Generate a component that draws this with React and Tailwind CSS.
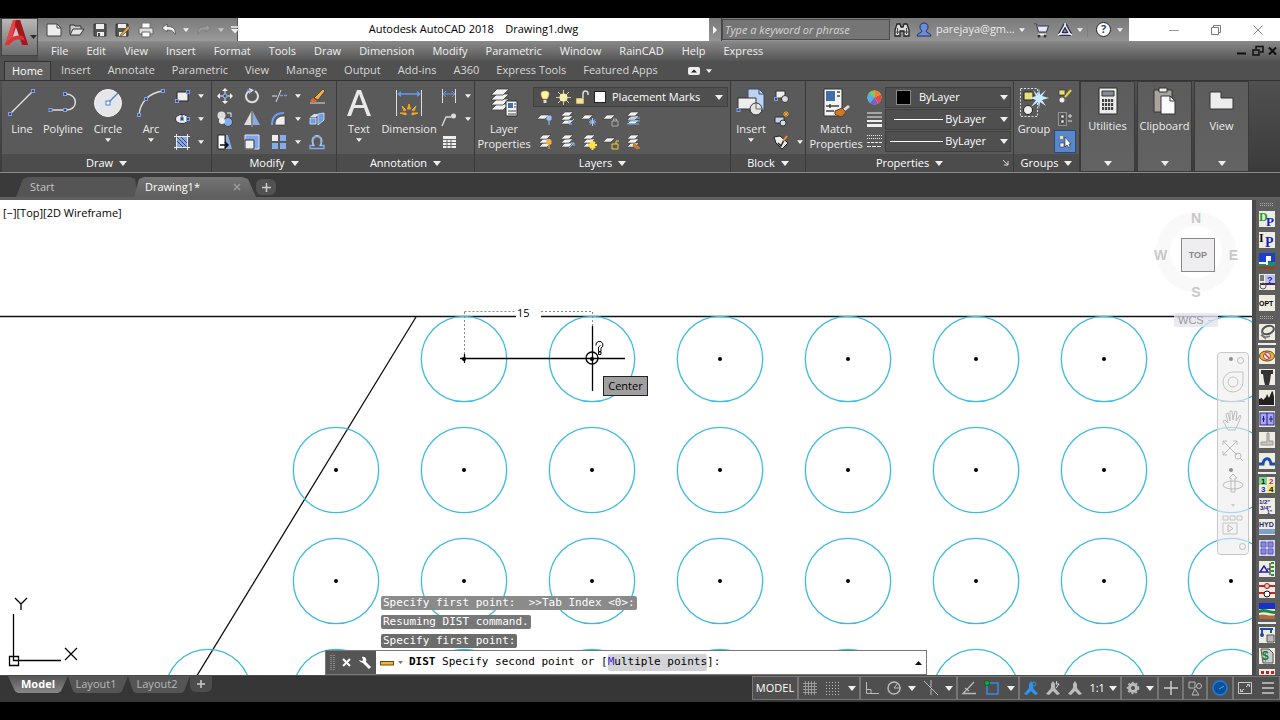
import clsx from "clsx";

const menus = ["File", "Edit", "View", "Insert", "Format", "Tools", "Draw", "Dimension", "Modify", "Parametric", "Window", "RainCAD", "Help", "Express"];
const ribbonTabs = ["Insert", "Annotate", "Parametric", "View", "Manage", "Output", "Add-ins", "A360", "Express Tools", "Featured Apps"];

function Icon({ w = 16, h = w, box, children, className }) {
  return (
    <svg width={w} height={h} viewBox={box || `0 0 ${w} ${h}`} fill="none" className={clsx("shrink-0", className)} aria-hidden="true">
      {children}
    </svg>
  );
}

function Caret({ className, big }) {
  return (
    <svg width={big ? 8 : 6} height={big ? 5 : 4} viewBox="0 0 8 5" className={clsx("shrink-0", className)} aria-hidden="true">
      <path d="M0 0h8L4 5z" fill="#f0f0f0" />
    </svg>
  );
}

/* grip squares used on the draw icons */
function Grip({ x, y }) {
  return <rect x={x - 1.5} y={y - 1.5} width="3" height="3" fill="#3c4a66" stroke="#7f9fea" />;
}

function Panel({ title, className, children, launcher }) {
  return (
    <section className={clsx("flex shrink-0 flex-col border-r border-[#3a3a3a] bg-[#5a5a5a]", className)}>
      <div className="flex flex-1 pt-[3px]">{children}</div>
      <button className="relative flex h-[18px] items-center justify-center gap-1.5 bg-[#4c4c4c] text-[11px] text-white">
        {title}
        <Caret big />
        {launcher && (
          <Icon w={6} className="absolute right-1">
            <path d="M0 0l5 5M5 1v4H1" stroke="#ddd" />
          </Icon>
        )}
      </button>
    </section>
  );
}

function BigButton({ label, icon, caret, className }) {
  return (
    <button className={clsx("flex shrink-0 flex-col items-center text-[11px] leading-[15px] text-[#ececec]", className)}>
      <span className="flex h-[37px] items-center">{icon}</span>
      <span className="whitespace-pre text-center">{label}</span>
      {caret && <Caret className="mt-0.5" />}
    </button>
  );
}

function Small({ icon, caret, label, className }) {
  return (
    <button aria-label={label} className={clsx("flex h-[23px] items-center gap-2", className)}>
      {icon}
      {caret && <Caret />}
    </button>
  );
}

function Logo() {
  return (
    <Icon w={36} h={37}>
      <path d="M3 26L11 1h7l8 25h-6l-3-8-8 2-2 6z" fill="#c3262c" />
      <path d="M3 26L11 1h3L8 26z" fill="#e8454a" />
      <path d="M14 8l3 9-7 3z" fill="#d2c8c8" />
      <path d="M14 1h4l8 25h-5L13 5z" fill="#a3161d" />
      <path d="M3 26c5-8 11-11 18-9l2 5c-7-3-12-1-16 4z" fill="#d83238" />
      <path d="M28 16h7l-3.500 4z" fill="#2b2b2b" />
    </Icon>
  );
}

function QuickAccess() {
  return (
    <div className="flex w-[200px] shrink-0 items-center gap-[7px] border-r border-[#555] bg-gradient-to-b from-[#7a7a7a] to-[#9a9a9a] pl-2">
      <button aria-label="New">
        <Icon w={16}><path d="M1 2h10l4 4v8H1z" fill="#eee" stroke="#444" /><path d="M11 2v4h4" stroke="#444" /></Icon>
      </button>
      <button aria-label="Open">
        <Icon w={16}><path d="M1 12V3h4l1 1h6v2" stroke="#333" fill="#ccc" /><path d="M1 13L4 7h11l-4 6z" fill="#e4e4e4" stroke="#333" /></Icon>
      </button>
      <button aria-label="Save">
        <Icon w={16}><path d="M2 2h12v12H2z" fill="#555" stroke="#333" /><path d="M4 2h8v5H4zM5 10h7v4H5z" fill="#eee" /><path d="M6 11h2v3H6z" fill="#444" /></Icon>
      </button>
      <button aria-label="Save As">
        <Icon w={16}><path d="M1 2h12v12H1z" fill="#555" stroke="#333" /><path d="M3 2h8v4H3zM4 10h7v4H4z" fill="#eee" /><path d="M6 12L13 4l2 2-7 7-3 1z" fill="#eaa23a" stroke="#553" strokeWidth=".7" /></Icon>
      </button>
      <button aria-label="Plot">
        <Icon w={16}><path d="M4 6V1h8v5" fill="#fff" stroke="#777" /><path d="M1 6h14v6H1z" fill="#ddd" stroke="#666" /><path d="M4 10h8v5H4z" fill="#fff" stroke="#666" /></Icon>
      </button>
      <button aria-label="Undo" className="flex items-center gap-1.5">
        <Icon w={16}><path d="M1 6l5-4v2.500c6 0 9 2 8 8-2-4-4-4.500-8-4.500V10z" fill="#f3f3f3" stroke="#444" strokeWidth=".7" /></Icon>
        <Caret />
      </button>
      <button aria-label="Redo" className="flex items-center gap-1.5">
        <Icon w={16}><path d="M15 6l-5-4v2.500c-6 0-9 2-8 8 2-4 4-4.500 8-4.500V10z" fill="#999" stroke="#777" strokeWidth=".7" /></Icon>
        <Caret className="opacity-60" />
      </button>
      <button aria-label="Customize">
        <Icon w={8} h={8}><path d="M0 1h8" stroke="#eee" strokeWidth="1.500" /><path d="M0 3h8L4 7.500z" fill="#eee" /></Icon>
      </button>
    </div>
  );
}

function InfoCenter() {
  return (
    <div className="flex shrink-0 items-center bg-gradient-to-b from-[#7a7a7a] to-[#949494]">
      <button aria-label="Collapse" className="flex h-full w-[13px] items-center justify-center border-r border-[#444]">
        <Icon w={5} h={8}><path d="M0 0l4 4-4 4z" fill="#fff" /></Icon>
      </button>
      <input
        aria-label="Search"
        placeholder="Type a keyword or phrase"
        className="h-[21px] w-[168px] border border-[#4b4b4b] bg-[#757575] px-0.5 text-[11px] italic placeholder:text-[#d6d6d6]"
      />
      <div className="flex w-[239px] items-center text-[11px] text-[#ececec]">
        <button aria-label="Find" className="ml-1">
          <Icon w={16}><path d="M1 14V8l2-6h3l1 3h2l1-3h3l2 6v6h-5V9H6v5z" fill="#dcdcdc" stroke="#222" strokeWidth="1.300" /><path d="M3.500 6v6M12.500 6v6M1 10h5M10 10h5" stroke="#444" /></Icon>
        </button>
        <button className="ml-1.5 flex items-center gap-1">
          <Icon w={16}><path d="M8 1c3 0 4 2 4 4s-1 3-2 4c0 2 5 2 5 5H1c0-3 5-3 5-5-1-1-2-2-2-4s1-4 4-4z" fill="#6d8bd8" stroke="#203062" /></Icon>
          <span>parejaya@gm...</span>
          <Caret />
        </button>
        <button aria-label="App Store" className="ml-2">
          <Icon w={16}><path d="M1 2h2.500l2 8h8l2-6H5" fill="#e8e8f4" stroke="#2a2e50" /><path d="M5 12.500h8" stroke="#eee" strokeWidth="2" /><circle cx="6" cy="14" r="1.500" fill="#333" /><circle cx="12" cy="14" r="1.500" fill="#333" /></Icon>
        </button>
        <button aria-label="A360" className="ml-2 flex items-center gap-1">
          <Icon w={16}><path d="M8 3l5 9H3z" stroke="#2a2e50" strokeWidth="4" strokeLinejoin="round" /><path d="M8 3l5 9H3z" stroke="#eee" strokeWidth="1.500" /><path d="M8 1v4M1 13l4-2M15 13l-4-2" stroke="#eee" strokeWidth="1.500" /></Icon>
          <Caret />
        </button>
        <button aria-label="Help" className="ml-auto flex items-center gap-1.5 border-l border-[#7d7d7d] pr-1.5 pl-2">
          <span className="flex size-[15px] items-center justify-center rounded-full border border-[#222] bg-white text-[11px] font-bold text-[#2b4672]">?</span>
          <Caret />
        </button>
      </div>
      <div className="flex h-full w-[151px] items-center justify-end gap-[30px] bg-white pr-4">
        <button aria-label="Minimize"><Icon w={12}><path d="M1 6.500h10" stroke="#999" /></Icon></button>
        <button aria-label="Restore"><Icon w={12}><path d="M1.500 3.500h7v7h-7zM3.500 3V1.500h7v7H9" stroke="#777" /></Icon></button>
        <button aria-label="Close"><Icon w={12}><path d="M1.500 1.500l9 9M10.500 1.500l-9 9" stroke="#888" /></Icon></button>
      </div>
    </div>
  );
}

function TopBars() {
  return (
    <header className="flex h-[43px] shrink-0 bg-[#505050] pl-px">
      <button aria-label="Application menu" className="flex h-[38px] w-[37px] shrink-0 border border-[#444] bg-gradient-to-b from-[#b8b8b8] to-[#6d6d6d]">
        <Logo />
      </button>
      <div className="flex min-w-0 flex-1 flex-col">
        <div className="flex h-[23px] bg-white">
          <QuickAccess />
          <h1 className="flex flex-1 items-center justify-center whitespace-pre text-[11px] text-black">{"Autodesk AutoCAD 2018    Drawing1.dwg"}</h1>
          <InfoCenter />
        </div>
        <div className="flex h-5 items-center bg-gradient-to-b from-[#8a8a8a] to-[#555] pl-[13px] text-[11px] text-[#f0f0f0]">
          <nav className="flex gap-[18px]">
            {menus.map((m) => <button key={m}>{m}</button>)}
          </nav>
          <div className="ml-auto flex items-center gap-1 pr-0.5">
            <button aria-label="Minimize drawing"><Icon w={12}><path d="M1 8.500h9" stroke="#111" strokeWidth="2" /></Icon></button>
            <button aria-label="Restore drawing"><Icon w={12}><path d="M1 5h6v5H1zM4 4V1.500h7V7H8" stroke="#111" strokeWidth="1.500" /></Icon></button>
            <button aria-label="Close drawing"><Icon w={10}><path d="M1 1.500l7 7M8 1.500l-7 7" stroke="#111" strokeWidth="2" /></Icon></button>
          </div>
        </div>
      </div>
    </header>
  );
}

const lineIcon = <Icon w={30} h={30}><path d="M3 26L26 3" stroke="#ddd" strokeWidth="1.500" /><Grip x={3} y={26} /><Grip x={26} y={3} /></Icon>;
const polyIcon = <Icon w={30} h={30}><path d="M2 22h16c13 0 12-16 0-16" stroke="#ddd" strokeWidth="1.500" /><Grip x={2.5} y={22} /><Grip x={17} y={22} /><Grip x={17} y={6} /></Icon>;
const circleIcon = <Icon w={30} h={30}><circle cx="15" cy="15" r="13.500" fill="#e4e6ea" stroke="#f5f5f5" /><path d="M15 15L25 5" stroke="#4d8ac0" strokeWidth="1.500" /><rect x="13" y="13" width="4" height="4" fill="#fff" stroke="#3f83d8" /></Icon>;
const arcIcon = <Icon w={30} h={30}><path d="M3 27C4 15 12 5 27 3" stroke="#ddd" strokeWidth="1.500" /><Grip x={3} y={27} /><Grip x={10} y={11} /><Grip x={27} y={3} /></Icon>;
const textIcon = <Icon w={26} h={30}><path d="M1 28L11 2h4l10 26h-4l-3-8H8l-3 8zM9 17h8L13 6z" fill="#e8e8e8" /></Icon>;
const dimIcon = (
  <Icon w={28} h={30}>
    <path d="M1.500 2v26M26.500 2v26" stroke="#ddd" /><path d="M4 6h20" stroke="#5b9cf5" strokeWidth="1.500" /><path d="M2 6l4-3v6zM26 6l-4-3v6z" fill="#5b9cf5" />
    <path d="M14 16l1.500 5h-3zM7 18l4 4-2 1zM21 18l-4 4 2 1zM5 25h6v2zM23 25h-6v2z" fill="#f3a52c" stroke="#f3a52c" />
  </Icon>
);

function Sheets({ x = 0, y = 0, n = 3, fill = "#f2f2f2" }) {
  const ys = [8, 4, 0].slice(3 - n);
  return ys.map((d) => <path key={d} d={`M${x + 4} ${y + d}h8l-4 4H${x}z`} fill={fill} stroke="#3a3a3a" strokeWidth=".6" />);
}

const layerPropsIcon = (
  <Icon w={30} h={30}>
    {[16, 11, 6, 1].map((y) => <path key={y} d={`M8 ${y}h12l-6 6H2z`} fill="#f2f2f2" stroke="#3a3a3a" strokeWidth=".8" />)}
    <path d="M17 13h11v15H17z" fill="#f6f6f6" stroke="#333" /><path d="M19 15h5v5h-5z" fill="#4271ae" /><path d="M25 16h2M25 19h2M19 23h8M19 26h8" stroke="#444" />
  </Icon>
);
const insertIcon = (
  <Icon w={30} h={30}>
    <path d="M12 1h11l5 5v16H12z" fill="#bdd3f2" stroke="#3c4b66" /><path d="M23 1v5h5" stroke="#3c4b66" />
    <path d="M2 10h18v11H2z" fill="#eee" stroke="#333" /><circle cx="20" cy="21" r="6" fill="#e3e3e3" stroke="#333" /><path d="M20 21v-5M20 21h5" stroke="#666" /><Grip x={2.5} y={22} />
  </Icon>
);
const matchIcon = (
  <Icon w={30} h={30}>
    <path d="M3 1h18v27H3z" fill="#f3f3f3" stroke="#333" /><path d="M5 3h9v10H5z" fill="#3f6ea8" /><path d="M16 4h3M16 8h3M5 18h13M5 23h8M9 16v4" stroke="#444" strokeWidth="1.500" />
    <path d="M27 17l2 2-5 4-2-2z" fill="#ddd" /><path d="M14 23l7-3 4 4-4 5c-3-1-5-1-7-3z" fill="#c97a2c" stroke="#6b3d12" />
  </Icon>
);
const groupIcon = (
  <Icon w={30} h={31}>
    <path d="M1.500 1.500h17v28h-17z" stroke="#ddd" strokeDasharray="2 1.500" /><path d="M5 5h9v8H5z" fill="#e8df7a" stroke="#222" /><circle cx="9" cy="23" r="4.500" fill="#eee" stroke="#222" />
    <path d="M20 1l1 7 6-5-4 6 7 2-7 2 4 6-6-4-1 7-1-7-7 5 5-7-6-2 6-2-3-6 5 5z" fill="#c8ecff" />
  </Icon>
);
const calcIcon = (
  <Icon w={22} h={28}>
    <path d="M2 1h18v26H2z" fill="#ededed" stroke="#2b2b2b" /><path d="M5 4h12v5H5z" fill="#848b92" stroke="#333" />
    {[12, 16, 20].map((y) => [5, 8, 11, 14].map((x) => <rect key={`${x}-${y}`} x={x} y={y} width="2.200" height="3" fill="#444" />))}
  </Icon>
);
const clipIcon = (
  <Icon w={26} h={28}>
    <path d="M2 3h18v22H2z" fill="#a9a59d" stroke="#333" /><path d="M7 1h8v4H7z" fill="#eee" stroke="#333" /><path d="M9 9h9l5 5v13H9z" fill="#fafafa" stroke="#333" /><path d="M18 9v5h5" stroke="#333" />
  </Icon>
);
const viewIcon = <Icon w={26} h={28}><path d="M1 5h11v6h12v11H1z" fill="#ececec" stroke="#333" /></Icon>;

const modifyIcons = [
  ["Move", <Icon><path d="M8 0l3 3H5zM8 16l3-3H5zM0 8l3-3v6zM16 8l-3-3v6z" fill="#f2f2f2" /><path d="M8 3v3M8 10v3M3 8h3M10 8h3" stroke="#eee" /><Grip x={8} y={8} /></Icon>],
  ["Rotate", <Icon><path d="M11 3a6 6 0 1 1-6 0" stroke="#ddd" strokeWidth="2" /><path d="M5 0v6L10 2z" fill="#ddd" /><path d="M3 2h3v3" stroke="#6d9cf0" /></Icon>],
  ["Trim", <Icon><path d="M1 8h5M5 14l5-12" stroke="#ddd" /><path d="M9 7.500h7" stroke="#6d9cf0" strokeDasharray="3 1" strokeWidth="1.500" /></Icon>, true],
  ["Erase", <Icon><path d="M1 15h15" stroke="#ddd" /><path d="M5 10L14 1l2 2-7 9z" fill="#f0b04a" stroke="#222" strokeWidth=".6" /><path d="M4 10l4 3-3 2-4-2z" fill="#e6663c" /></Icon>],
  ["Copy", <Icon><circle cx="4.500" cy="4.500" r="4" fill="#ddd" /><circle cx="11" cy="11" r="4.500" fill="#86abe8" stroke="#345" /><circle cx="5" cy="10" r="3" fill="#eee" /><path d="M10 2h4v4" stroke="#eee" /></Icon>],
  ["Mirror", <Icon><path d="M7 1v13H0z" fill="#ddd" /><path d="M9 1v13h7z" fill="#86abe8" /><path d="M8 0v16" stroke="#eee" strokeWidth=".6" /></Icon>],
  ["Fillet", <Icon><path d="M1 14C1 6 5 2 13 2" stroke="#6d9cf0" strokeWidth="2" /><path d="M4 14c0-6 3-9 10-9v9z" fill="#eee" stroke="#333" strokeWidth=".6" /></Icon>, true],
  ["Explode", <Icon><path d="M1 6l4-3h5l-3 3z" fill="#cfe0fb" /><path d="M1 7h6v6H1zM9 3l6-1v7l-6 5z" fill="#6f9ce0" stroke="#dce8fc" strokeWidth=".8" /></Icon>],
  ["Stretch", <Icon><path d="M1 1h7v14H1z" fill="#fff" stroke="#222" /><path d="M9 1h2l4 14H9z" fill="#86abe8" /><path d="M3 11h7M8 8l3 3-3 3" stroke="#111" strokeWidth="1.500" /></Icon>],
  ["Scale", <Icon><path d="M1 1h14v14H1z" fill="#7fa6ea" stroke="#dce6f8" /><path d="M1 6h9v9H1z" fill="#eee" stroke="#333" /></Icon>],
  ["Array", <Icon><path d="M1 1h6v6H1z" fill="#eee" /><path d="M9 1h6v6H9zM1 9h6v6H1zM9 9h6v6H9z" fill="#86abe8" /></Icon>, true],
  ["Offset", <Icon><path d="M1 14.500h14v-3h-4c5-12-11-12-6 0H1z" stroke="#86abe8" strokeWidth="1.300" /><path d="M4.500 12c-7-14 14-14 7 0" stroke="#e2e9f5" strokeWidth=".8" /></Icon>],
];

const layerMarks = [
  <path key="a" d="M10 5h4v4h-4zM12 9v5" fill="#9ec0f3" stroke="#9ec0f3" />,
  <path key="b" d="M15 8l-5 5M10 10v3h3" stroke="#9ec0f3" />,
  <path key="c" d="M8 11h7M11.500 7v8M9 8.500l5 5M14 8.500l-5 5" stroke="#a8d0ff" />,
  <path key="d" d="M9 10h6v5H9zM10.500 10V8h3v2" stroke="#aaa" />,
  <path key="e" d="M3 10h12M2 13h12M5 7h10" stroke="#79b3ee" />,
  <path key="f" d="M10 6h4v4h-4zM12 10v5" fill="#f5ae3a" stroke="#f5ae3a" />,
  <path key="g" d="M10 14l5-5M12 9h3v3" stroke="#9ec0f3" />,
  <path key="h" d="M7 11h9M11.500 7v9M9 8l5 6M14 8l-5 6" stroke="#ffe14a" strokeWidth="2" />,
  <path key="i" d="M9 10h6v5H9zM13 10V7h3" stroke="#f0cc3a" />,
  <path key="j" d="M9 9l6 5-3 1-4-3z" fill="#c97a2c" stroke="#c97a2c" />,
];
const layerTools = ["Off", "Isolate", "Freeze", "Lock", "Make Current", "Turn All Layers On", "Unisolate", "Thaw All Layers", "Unlock", "Match Layer"];
const singleSheet = ["Off", "Freeze", "Lock", "Unlock"];

function LayersPanel() {
  return (
    <Panel title="Layers" className="w-[256px]">
      <BigButton className="w-[58px]" label={"Layer\nProperties"} icon={layerPropsIcon} />
      <div className="flex flex-1 flex-col pt-[3px]">
        <button className="mr-0.5 flex h-5 shrink-0 items-center gap-1 border border-[#404040] bg-[#4f4f4f] px-1 text-[11px] text-white">
          <Icon w={14}><path d="M7 1c6 0 4 5 2 8H5C3 6 1 1 7 1z" fill="#fff2a0" stroke="#c9b44c" strokeWidth=".6" /><path d="M5.500 10h3v3h-3z" fill="#ddd" /></Icon>
          <Icon w={15}><path d="M7.500 0v15M0 7.500h15M2 2l11 11M13 2L2 13" stroke="#d8cc9a" /><circle cx="7.500" cy="7.500" r="4" fill="#f8eeb0" /></Icon>
          <Icon w={15}><path d="M1 8h8v6H1z" fill="#f3e3a0" stroke="#6b5a20" strokeWidth=".6" /><path d="M8 8V4c0-4 5-4 5 0v1" stroke="#ddd" strokeWidth="1.500" /></Icon>
          <span className="size-3 border border-[#222] bg-white" />
          <span className="ml-0.5">Placement Marks</span>
          <Caret big className="ml-auto" />
        </button>
        <div className="grid w-[114px] grid-cols-5 pl-1">
          {layerTools.map((t, i) => (
            <Small
              key={t}
              label={t}
              icon={<Icon><Sheets x={singleSheet.includes(t) ? 0 : 2} y={singleSheet.includes(t) ? 4 : 1} n={singleSheet.includes(t) ? 1 : 3} />{layerMarks[i]}</Icon>}
            />
          ))}
        </div>
      </div>
    </Panel>
  );
}

function PropertyRow({ icon, children }) {
  return (
    <div className="flex h-[22px] items-center gap-0.5">
      <span className="flex w-[17px] justify-center">{icon}</span>
      <button className="flex h-[21px] flex-1 items-center border border-[#3f3f3f] bg-[#4f4f4f] pr-0.5 text-[11px] text-white">
        {children}
        <Caret big className="ml-auto" />
      </button>
    </div>
  );
}

function SlidePanel({ label, icon }) {
  return (
    <button className="mr-0.5 flex w-[55px] shrink-0 flex-col items-center border border-[#3a3a3a] bg-gradient-to-b from-[#5c5c5c] to-[#636363] text-[11px] leading-[15px] text-[#ececec]">
      <span className="mt-0.5 flex h-[34px] items-center">{icon}</span>
      {label}
      <Caret big className="mt-auto mb-[5px]" />
    </button>
  );
}

function Ribbon() {
  return (
    <div className="shrink-0 bg-[#505050]">
      <div className="flex h-[19px] items-center pl-1 text-[11px] text-[#d8d8d8]">
        <button className="flex h-full w-[47px] items-center justify-center border border-b-0 border-[#333] bg-[#626262] text-white">Home</button>
        <nav className="flex gap-[17px] pl-2.5">
          {ribbonTabs.map((t) => <button key={t}>{t}</button>)}
        </nav>
        <button aria-label="Minimize ribbon" className="ml-[30px] flex items-center gap-1.5">
          <Icon w={12} h={8}><rect width="12" height="8" rx="2" fill="#eee" /><path d="M3 5.500h6L6 2.500z" fill="#222" /></Icon>
          <Caret />
        </button>
      </div>
      <div className="flex h-[93px] border-t border-b border-t-[#333] border-b-[#8b8b8b] bg-gradient-to-b from-[#505050] to-[#3b3b3b] pl-0.5">
        <Panel title="Draw" className="w-[210px]">
          <BigButton className="w-10" label="Line" icon={lineIcon} />
          <BigButton className="w-[42px]" label="Polyline" icon={polyIcon} />
          <BigButton className="w-12" label="Circle" icon={circleIcon} caret />
          <BigButton className="w-[38px]" label="Arc" icon={arcIcon} caret />
          <div className="pl-1">
            <Small caret label="Rectangle" icon={<Icon><path d="M3 4h11v9H3z" fill="#eee" stroke="#222" /><Grip x={3} y={13} /><Grip x={14} y={4} /></Icon>} />
            <Small caret label="Ellipse" icon={<Icon><ellipse cx="8" cy="8" rx="6.500" ry="4.500" fill="#eee" stroke="#333" /><Grip x={8} y={8} /><Grip x={14} y={8} /><path d="M8 3v4" stroke="#336" /></Icon>} />
            <Small caret label="Hatch" icon={<Icon><path d="M2.500 0v16M13.500 0v16M0 2.500h16M0 13.500h16" stroke="#e8e8e8" /><path d="M3 3h10v10H3z" fill="#89a9e6" /><path d="M3 7l6 6M3 3l10 10M7 3l6 6" stroke="#30436b" /></Icon>} />
          </div>
        </Panel>
        <Panel title="Modify" className="w-[125px]">
          <div className="grid h-[69px] grid-cols-[27px_27px_38px_20px] pl-[5px]">
            {modifyIcons.map(([label, icon, caret]) => <Small key={label} label={label} icon={icon} caret={caret} />)}
          </div>
        </Panel>
        <Panel title="Annotation" className="w-[138px]">
          <BigButton className="w-[44px]" label="Text" icon={textIcon} caret />
          <BigButton className="w-[56px]" label="Dimension" icon={dimIcon} />
          <div className="pl-1">
            <Small caret label="Linear" icon={<Icon><path d="M1.500 1v14M14.500 1v14" stroke="#ddd" /><path d="M2 6h12M5 3L2 6l3 3M11 3l3 3-3 3" stroke="#5b9cf5" /></Icon>} />
            <Small caret label="Leader" icon={<Icon><path d="M1 15L5 6h5" stroke="#ddd" strokeWidth="1.300" /><circle cx="12.500" cy="5" r="2.500" fill="#ddd" /></Icon>} />
            <Small label="Table" icon={<Icon><path d="M2 2h13v12H2z" fill="#eee" /><path d="M2 5.500h13M2 8.500h13M2 11.500h13M6 5v9M10 5v9" stroke="#666" /></Icon>} />
          </div>
        </Panel>
        <LayersPanel />
        <Panel title="Block" className="w-[75px]">
          <BigButton className="w-10" label="Insert" icon={insertIcon} caret />
          <div className="pl-0.5">
            <Small label="Create" icon={<Icon><path d="M3 3h9v7H3z" fill="#eee" stroke="#333" /><circle cx="12" cy="11" r="3.500" fill="#ddd" stroke="#333" /><Grip x={3} y={11} /></Icon>} />
            <Small label="Edit" icon={<Icon><path d="M2 6h9v6H2z" fill="#bdd3f2" stroke="#333" /><circle cx="10" cy="12" r="3" fill="#ddd" stroke="#333" /><path d="M11 5l4-4M11 1l4 4M13 0v6M10 3h6" stroke="#f3a52c" /></Icon>} />
            <Small caret label="Edit Attributes" icon={<Icon><path d="M1 3l6-1 8 7-6 6-6-6z" fill="#eee" stroke="#222" /><path d="M5 9l3 3 3-6" stroke="#222" strokeWidth="1.500" /><path d="M10 7l4-5" stroke="#e8923a" strokeWidth="2" /></Icon>} />
          </div>
        </Panel>
        <Panel title="Properties" launcher className="w-[208px]">
          <BigButton className="w-[60px]" label={"Match\nProperties"} icon={matchIcon} />
          <div className="flex-1 pt-0.5 pr-0.5">
            <PropertyRow icon={<Icon w={15}><circle cx="7.500" cy="7.500" r="7" fill="#f4c63e" /><path d="M7.500 7.500V.5a7 7 0 0 1 6 3.500z" fill="#ef7d3a" /><path d="M7.500 7.500L2 3a7 7 0 0 1 5.500-2.500z" fill="#7fc85a" /><path d="M7.500 7.500L2 3a7 7 0 0 0 1 10z" fill="#4fb0e8" /><path d="M7.500 7.500L3 13a7 7 0 0 0 8 .5z" fill="#7a5ad0" /><path d="M7.500 7.500l4 6a7 7 0 0 0 2-9z" fill="#e0484e" /></Icon>}>
              <span className="mr-2 ml-2.5 size-[15px] border border-[#888] bg-black" />
              <span>ByLayer</span>
            </PropertyRow>
            <PropertyRow icon={<Icon w={15}><path d="M0 1h15M0 5h15" stroke="#eee" /><path d="M0 9h15" stroke="#eee" strokeWidth="2" /><path d="M0 13.500h15" stroke="#eee" strokeWidth="3" /></Icon>}>
              <span className="mr-0.5 ml-2 h-px flex-1 bg-white" />
              <span className="mr-3.5">ByLayer</span>
            </PropertyRow>
            <PropertyRow icon={<Icon w={15}><path d="M0 1.500h15M0 4.500h15" stroke="#eee" strokeDasharray="1 1" /><path d="M0 8.500h15" stroke="#eee" strokeDasharray="3 1" /><path d="M0 12.500h15" stroke="#eee" strokeDasharray="4 1" /></Icon>}>
              <span className="mr-0.5 ml-1 h-px flex-1 bg-white" />
              <span className="mr-3.5">ByLayer</span>
            </PropertyRow>
          </div>
        </Panel>
        <Panel title="Groups" className="w-[66px]">
          <BigButton className="w-10" label="Group" icon={groupIcon} />
          <div>
            <Small label="Group Edit" className="w-[22px] justify-center" icon={<Icon><path d="M2 2h6v5H2z" fill="#e8df7a" stroke="#222" strokeWidth=".6" /><circle cx="5" cy="12" r="2.500" fill="#eee" /><path d="M8 9l6-7" stroke="#f3d23a" strokeWidth="2" /></Icon>} />
            <Small label="Ungroup" className="w-[22px] justify-center" icon={<Icon><path d="M1.500 1.500h8v13h-8z" stroke="#ccc" strokeDasharray="1 1" /><path d="M4 4h3v3H4zM4 9h3v3H4z" fill="#eee" stroke="#222" strokeWidth=".5" /><path d="M11 5h4M13 3v4M11 10h4" stroke="#ddd" /></Icon>} />
            <Small label="Group Selection" className="w-[22px] justify-center border border-[#294a80] bg-[#5a86cc]" icon={<Icon><path d="M3 2h3v3H3z" fill="#f3e57a" /><path d="M3 9h4v4H3z" fill="#eee" stroke="#222" strokeWidth=".5" /><path d="M8 3v10l2-2 2 3 1-1-1-3h2z" fill="#fff" stroke="#222" strokeWidth=".6" /></Icon>} />
          </div>
        </Panel>
        <SlidePanel label="Utilities" icon={calcIcon} />
        <SlidePanel label="Clipboard" icon={clipIcon} />
        <SlidePanel label="View" icon={viewIcon} />
      </div>
    </div>
  );
}

function FileTabs() {
  return (
    <div className="flex h-[27px] shrink-0 items-end border-b-[3px] border-[#606060] bg-[#3a3a3a] pl-4 text-[11px]">
      <button className="h-5 w-[122px] bg-[#555] pl-3.5 text-left text-[#c4c4c4] [clip-path:polygon(0_100%,7px_10%,12px_0,114px_0,119px_10%,100%_100%)]">Start</button>
      <div className="-ml-1 flex h-5 w-[122px] items-center justify-between bg-gradient-to-b from-[#757575] to-[#5e5e5e] pr-[15px] pl-[11px] text-white [clip-path:polygon(0_100%,5px_10%,10px_0,108px_0,114px_10%,100%_100%)]">
        <button>Drawing1*</button>
        <button aria-label="Close tab"><Icon w={8}><path d="M1 1l6 6M7 1L1 7" stroke="#999" strokeWidth="1.500" /></Icon></button>
      </div>
      <button aria-label="New drawing" className="mb-0.5 flex h-4 w-5 items-center justify-center rounded-md bg-[#525252]">
        <Icon w={9}><path d="M4.500 0v9M0 4.500h9" stroke="#ccc" strokeWidth="1.500" /></Icon>
      </button>
    </div>
  );
}

const columns = [208, 336, 464, 592, 720, 848, 976, 1104, 1231];
const rows = [
  { y: 159, from: 2 },
  { y: 270, from: 1 },
  { y: 381, from: 1 },
  { y: 492, from: 0 },
];

function Drawing() {
  return (
    <svg className="absolute inset-0 h-full w-full" fill="none" aria-label="Model space">
      <path d="M0 116.500H516M541 116.500H3000M416 117L190 487" stroke="#111" strokeWidth="1.300" />
      {rows.map((r) => columns.slice(r.from).map((x) => (
        <g key={`${x}-${r.y}`}>
          <circle cx={x} cy={r.y} r="42.700" stroke="#3fbbe2" strokeWidth="1.300" />
          <circle cx={x} cy={r.y} r="2" fill="#000" />
        </g>
      )))}
      <path d="M464.500 111.500H516M541 111.500H592.500M464.500 112v46M592.500 112v14" stroke="#888" strokeDasharray="2 2" />
      <path d="M460 158.500H625M464.500 154v9M592.500 126v65" stroke="#000" strokeWidth="1.300" />
      <circle cx="592" cy="158" r="6" stroke="#000" strokeWidth="1.300" />
      <path d="M596 145.500a3.500 3.500 0 1 1 5 2.500v3.500h-2.500V147l2-1.500M598.500 152h2.500v2.500h-2.500z" stroke="#000" />
      <path d="M13.500 414v46.500H61M9.500 456.500h9v9h-9z" stroke="#000" strokeWidth="1.300" />
      <path d="M15 398l6 6 6-6M21 404v6M65 448l12 12M77 448l-12 12" stroke="#000" strokeWidth="1.300" />
    </svg>
  );
}

function ViewCube() {
  return (
    <div className="absolute top-2 right-3.5 w-[84px] text-center font-['Liberation_Sans'] text-[14px] leading-5 font-bold text-[#c8c8c8]">
      <span className="absolute top-1 left-0.5 -z-0 size-20 rounded-full border-[14px] border-[#f9f9f9]" />
      <div className="relative">N</div>
      <div className="relative flex h-[54px] items-center justify-between">
        <span>W</span>
        <button className="flex size-[34px] items-center justify-center border border-[#888] bg-[#eeeef1] text-[9px] text-[#888]">TOP</button>
        <span>E</span>
      </div>
      <div className="relative">S</div>
      <button className="mt-[11px] mr-auto ml-5 flex h-[14px] w-[44px] items-center gap-1 rounded-xs bg-[#e4e4ef]/80 px-1 text-[11px] font-normal text-[#999]">
        WCS<span className="h-px w-2.5 bg-[#ccc]" />
      </button>
    </div>
  );
}

function NavBar() {
  return (
    <div className="absolute top-[152px] right-[3px] flex w-8 flex-col items-center gap-2 rounded-sm border border-[#c8c8c8] bg-[#ececec]/60 pt-[18px] pb-1">
      <button aria-label="Close navigation bar" className="absolute top-1 right-1"><Icon w={7}><circle cx="3.500" cy="3.500" r="3" stroke="#bbb" /></Icon></button>
      <button aria-label="Steering wheel"><Icon w={22}><path d="M11 1a10 10 0 1 0 10 10V1z" stroke="#c4c4c4" /><circle cx="11" cy="11" r="5" stroke="#c4c4c4" /></Icon></button>
      <span className="h-px w-6 bg-[#ccc]" />
      <button aria-label="Pan"><Icon w={22}><path d="M6 20L1 11l2-1 3 3-2-9 2-1 2 8V1h2l1 9 2-9 2 1-1 9 4-6 1 1-3 8-3 6z" stroke="#bcbcbc" /></Icon></button>
      <button aria-label="Zoom extents"><Icon w={22}><path d="M1 1l14 14M15 1L1 15M1 5V1h4M11 1h4v4M1 11v4h4" stroke="#bcbcbc" /><circle cx="16" cy="16" r="3" stroke="#bcbcbc" /><path d="M18 18l3 3" stroke="#bcbcbc" /></Icon></button>
      <button aria-label="Orbit" className="flex flex-col items-center gap-2 pt-1">
        <Icon w={22}><path d="M9 4v14h4V4h2l-4-4-4 4z" stroke="#bcbcbc" /><ellipse cx="11" cy="11" rx="10" ry="4" stroke="#bcbcbc" /></Icon>
        <Icon w={4} h={3}><path d="M0 0h4L2 3z" fill="#ccc" /></Icon>
      </button>
      <button aria-label="ShowMotion"><Icon w={22} h={20}><path d="M1 1h5v4H1zM8 1h5v4H8zM15 1h5v4h-5zM1 8h14v11H1z" stroke="#c4c4c4" /><path d="M6 10l5 3.500L6 17z" stroke="#bcbcbc" /></Icon></button>
      <button aria-label="Navigation bar options" className="mr-0.5 self-end"><Icon w={7}><circle cx="3.500" cy="3.500" r="3" stroke="#bbb" /></Icon></button>
    </div>
  );
}

function CommandLine() {
  const log = [
    { text: "Specify first point:  >>Tab Index <0>:", tone: "bg-[#858585]/95" },
    { text: "Resuming DIST command.", tone: "bg-[#707070]/95" },
    { text: "Specify first point:", tone: "bg-[#646464]/95" },
  ];
  return (
    <div className="absolute bottom-0 left-[325px] w-[602px] font-['DejaVu_Sans_Mono'] text-[11px]">
      <div className="mb-0.5 ml-14 flex flex-col items-start gap-[5px] leading-[14px]">
        {log.map((l, i) => <p key={i} className={clsx("rounded-xs px-0.5 whitespace-pre text-white", l.tone)}>{l.text}</p>)}
      </div>
      <div className="flex h-[25px] items-center border border-[#777] bg-white">
        <div className="flex h-full w-[50px] items-center justify-between bg-[#555] px-1">
          <Icon w={5} h={16}><path d="M1 0v16M4 0v16" stroke="#bbb" strokeDasharray="1 1" /></Icon>
          <button aria-label="Close command line"><Icon w={9}><path d="M1 1l7 7M8 1L1 8" stroke="#fff" strokeWidth="2" /></Icon></button>
          <button aria-label="Customize command line"><Icon w={14}><path d="M12 12L6 6" stroke="#fff" strokeWidth="3" /><path d="M1 4l3 1 1-1-1-3c4-1 5 3 4 5s-6 1-7-2z" fill="#fff" /></Icon></button>
        </div>
        <button aria-label="Recent commands" className="ml-1 flex items-center gap-1">
          <Icon w={14} h={6}><rect x=".5" y="1.500" width="13" height="3.500" fill="#f3b52c" stroke="#6b4a10" /></Icon>
          <Icon w={5} h={3}><path d="M0 0h5L2.500 3z" fill="#777" /></Icon>
        </button>
        <p className="ml-1.5 whitespace-pre text-black">
          <b>DIST</b>{" Specify second point or ["}
          <button className="rounded-xs bg-[#d4d4d8]"><span className="text-[#3c28d8]">M</span>ultiple points</button>
          {"]:"}
        </p>
        <button aria-label="Command history" className="mr-1 ml-auto"><Icon w={7} h={4}><path d="M0 4h7L3.500 0z" fill="#111" /></Icon></button>
      </div>
    </div>
  );
}

function Grips() {
  return <Icon w={14} h={3}><path d="M0 .5h14M0 2.500h14" stroke="#aaa" strokeDasharray="1 1" /></Icon>;
}

function Divider() {
  return <span className="-my-0.5 h-0.5 w-[18px] shrink-0 bg-[#eee]" />;
}

function Tile({ label, children }) {
  return (
    <button aria-label={label} className="shrink-0">
      <Icon><rect width="16" height="16" fill="#efece2" />{children}</Icon>
    </button>
  );
}

const serif = { fontFamily: "Liberation Serif", fontWeight: 700 };
const sans = { fontFamily: "Liberation Sans", fontWeight: 700 };

function SideToolbar() {
  return (
    <aside className="flex w-7 shrink-0 flex-col items-center gap-[5px] overflow-hidden border-l-4 border-[#4a4a4a] bg-[#5e5e5e] pt-[3px] pr-0.5">
      <Grips />
      <Tile label="Drip"><text x="0" y="10" fontSize="12" fill="#1f9c38" style={serif}>D</text><text x="7" y="15" fontSize="13" fill="#1c1cc4" style={serif}>P</text></Tile>
      <Tile label="Irrigation"><text x="0" y="10" fontSize="12" fill="#111" style={serif}>I</text><text x="6" y="15" fontSize="14" fill="#1c1cc4" style={serif}>P</text></Tile>
      <Tile label="Landscape"><rect width="16" height="9" fill="#1a3fd0" /><rect y="9" width="16" height="4" fill="#1c8a7c" /><rect y="13" width="16" height="3" fill="#8a4a1c" /><path d="M0 9h7V3h5v5H9v4H7v-1H0z" fill="#fff" /></Tile>
      <Tile label="Query"><rect x="6" y="1" width="10" height="8" fill="#b9c4f2" /><text x="8" y="9" fontSize="9" fill="#1c1cc4" style={sans}>?</text><path d="M1 1h4v6H1z" fill="#777" /><path d="M1 10h15" stroke="#4c2060" strokeWidth="2" /><circle cx="4" cy="12" r="3" stroke="#555" /></Tile>
      <Tile label="Options"><text x="0" y="11" fontSize="7" fill="#000" style={sans}>OPT</text></Tile>
      <Grips />
      <Tile label="Pipe"><ellipse cx="9" cy="6" rx="6" ry="4" transform="rotate(-20 9 6)" stroke="#555" strokeWidth="2" /><path d="M3 8c0 5 4 6 8 4M2 11l5 4" stroke="#777" strokeWidth="1.500" /></Tile>
      <Divider />
      <Tile label="View emitter"><ellipse cx="8" cy="8" rx="7.500" ry="5" fill="#e8b43a" stroke="#6b4a10" /><circle cx="8" cy="8" r="3.500" fill="#fff" stroke="#b33" /><path d="M6 6l4 4" stroke="#c22" strokeWidth="1.500" /></Tile>
      <Tile label="Sprinkler"><path d="M2 1h12v4h-2l-1 7-1 4H6l-1-4-1-7H2z" fill="#333" /></Tile>
      <Tile label="Spray"><path d="M0 15V9l3-1 1 2 3-3 1-3 2 4 3-7 1 1 1 5v8z" fill="#222" /></Tile>
      <Tile label="Zones"><rect x="1" y="2" width="14" height="12" fill="#a9a6ee" stroke="#2b2b8c" /><path d="M8 2v12M3 8h3M10 8h4M4.500 5v6M12 5v6" stroke="#1c1c8c" /></Tile>
      <Tile label="Valve"><path d="M8 1h2v8h4v4H2v-3h6z" fill="#c9c6bb" stroke="#999" /></Tile>
      <Tile label="Crossing"><path d="M0 11h4c1-7 7-7 8 0h4" stroke="#1c4cac" strokeWidth="3" /></Tile>
      <Divider />
      <Tile label="Numbering"><rect width="8" height="8" fill="#7fd88a" /><rect x="8" y="8" width="8" height="8" fill="#f3e57a" /><text x="2" y="7" fontSize="8" fill="#111" style={sans}>1</text><text x="10" y="7" fontSize="8" fill="#c22" style={sans}>2</text><text x="2" y="15" fontSize="8" fill="#1c1cc4" style={sans}>3</text><text x="10" y="15" fontSize="8" fill="#111" style={sans}>4</text></Tile>
      <Tile label="Pipe sizes"><text x="0" y="6" fontSize="6" fill="#1c1c8c" style={sans}>1/2"</text><text x="1" y="12" fontSize="6" fill="#1c1c8c" style={sans}>3/4"</text><text x="8" y="16" fontSize="5" fill="#1c1c8c" style={sans}>1"</text></Tile>
      <Tile label="Hydraulics"><text x="0" y="8" fontSize="7" fill="#1c2c6c" style={sans}>HYD</text><rect y="10" width="16" height="5" fill="#7fa0c8" /></Tile>
      <Tile label="Grid"><rect width="16" height="16" fill="#d4d2f0" /><path d="M2 2h5v5H2zM9 2h5v5H9zM2 9h5v5H2zM9 9h5v5H9z" fill="#8a88dc" stroke="#5c5ab8" /></Tile>
      <Tile label="Network"><path d="M1 11l4-6 4 6z" stroke="#1c1cc4" strokeWidth="1.500" /><path d="M8 8h3M11 2v12" stroke="#111" /><path d="M12 2h3M12 6h3M12 10h3M12 14h3" stroke="#1c9c38" strokeWidth="2" /></Tile>
      <Tile label="Nodes"><path d="M0 4h16M0 11h16" stroke="#c22" strokeWidth="2" /><circle cx="8" cy="4" r="2.500" stroke="#822" fill="#f3c0b8" /><circle cx="8" cy="12" r="3" stroke="#111" fill="#fff" /></Tile>
      <Tile label="Terrain"><rect width="16" height="6" fill="#1a2fd0" /><path d="M0 7c6-3 9 1 16 1v3c-6 0-9-3-16-1z" fill="#1c8a3c" /><path d="M0 12c5-2 10 2 16 0v4H0z" fill="#b06a3c" /></Tile>
      <Divider />
      <Tile label="Quantities"><path d="M1 2h13M3 2v5M12 2v4" stroke="#1c4cac" strokeWidth="2" /><path d="M8 8h7v7H8z" fill="#bbb" stroke="#555" /><circle cx="3" cy="8" r="2" fill="#1c4cac" /></Tile>
      <Tile label="Costs"><path d="M2 1h8l4 4v10H4z" fill="#ccc" stroke="#555" /><text x="3" y="12" fontSize="12" fill="#1c7c38" style={sans}>$</text></Tile>
      <Tile label="Reports"><path d="M2 2h3v3H2zM7 2h3v3H7zM12 2h3v3h-3z" fill="#b22" /></Tile>
    </aside>
  );
}

function StatusGroup({ className, children }) {
  return <div className={clsx("flex h-6 shrink-0 items-center justify-around border border-[#777] bg-[#4f4f4f] text-white", className)}>{children}</div>;
}

function Toggle({ label, children, caret }) {
  return (
    <>
      <button aria-label={label}><Icon>{children}</Icon></button>
      {caret && <Caret big />}
    </>
  );
}

const man = "M8 1l2 3v4l5 6-3 1-4-4-4 4-3-1 5-6V4z";

function StatusBar() {
  return (
    <footer className="flex h-[27px] shrink-0 items-start border-t border-[#4a4a4a] bg-[#363636] text-[11px]">
      <div className="flex flex-1 pl-2 text-[#b8b8b8]">
        <button className="h-[17px] w-[60px] bg-gradient-to-b from-[#555] to-[#888] font-bold text-white [clip-path:polygon(0_0,100%_0,53px_90%,50px_100%,10px_100%,7px_90%)]">Model</button>
        <button className="h-[17px] w-[60px] bg-[#555] pr-1 [clip-path:polygon(0_0,100%_0,54px_90%,51px_100%,8px_100%,5px_90%)]">Layout1</button>
        <button className="h-[17px] w-[62px] bg-[#555] pr-1 [clip-path:polygon(0_0,100%_0,56px_90%,53px_100%,8px_100%,5px_90%)]">Layout2</button>
        <button aria-label="New layout" className="flex h-4 w-[22px] items-center justify-center rounded-b-md bg-[#4d4d4d]"><Icon w={8}><path d="M4 0v8M0 4h8" stroke="#ccc" strokeWidth="1.500" /></Icon></button>
      </div>
      <StatusGroup className="w-[46px]"><button>MODEL</button></StatusGroup>
      <StatusGroup className="w-[62px]">
        <Toggle label="Grid"><path d="M3.500 1v14M6.500 1v14M9.500 1v14M12.500 1v14M1 3.500h14M1 6.500h14M1 9.500h14M1 12.500h14" stroke="#aaa" strokeWidth=".8" /></Toggle>
        <Toggle label="Snap" caret><path d="M1 2.500h14M1 5.500h14M1 8.500h14M1 11.500h14M1 14.500h14" stroke="#bbb" strokeDasharray="1 2" /></Toggle>
      </StatusGroup>
      <StatusGroup className="w-[97px]">
        <Toggle label="Ortho"><path d="M2.500 2v11.500H15M2 9.500h5v4" stroke="#bbb" /></Toggle>
        <Toggle label="Polar" caret><circle cx="8" cy="8" r="6" stroke="#bbb" strokeWidth="1.500" /><path d="M8 8h7M8 8l4-5" stroke="#bbb" /></Toggle>
        <Toggle label="Isodraft" caret><path d="M1 1l14 14M8 0v7M8 9v6" stroke="#bbb" /></Toggle>
      </StatusGroup>
      <StatusGroup className="w-[62px]">
        <Toggle label="Object snap tracking"><path d="M13 2L2 13.500h13M4 8l4 3" stroke="#bbb" strokeWidth="1.300" /></Toggle>
        <Toggle label="Object snap" caret><path d="M3 3h11v11H3z" stroke="#3a86f0" strokeWidth="1.500" /><circle cx="3" cy="3" r="2.500" fill="#1fa832" stroke="#063" /></Toggle>
      </StatusGroup>
      <StatusGroup className="w-[102px]">
        <Toggle label="Annotation visibility"><path d={man} fill="#2f92f2" /><circle cx="11" cy="4" r="2" stroke="#2f92f2" /></Toggle>
        <Toggle label="Auto scale"><path d={man} fill="#bbb" /><path d="M12 1l-1 3h3l-3 4" stroke="#ddd" /></Toggle>
        <Toggle label="Annotation scale"><path d={man} fill="#bbb" /></Toggle>
        <button className="flex items-center gap-1">1:1<Caret big /></button>
      </StatusGroup>
      <StatusGroup className="w-[37px]">
        <Toggle label="Workspace" caret><circle cx="8" cy="8" r="3.500" stroke="#bbb" strokeWidth="3" /><circle cx="8" cy="8" r="5.500" stroke="#bbb" strokeWidth="1.500" strokeDasharray="2 2" /></Toggle>
      </StatusGroup>
      <StatusGroup className="w-[25px]"><Toggle label="Annotation monitor"><path d="M8 1v14M1 8h14" stroke="#ccc" strokeWidth="1.500" /></Toggle></StatusGroup>
      <StatusGroup className="w-6"><Toggle label="Isolate objects"><path d="M2 2h6v6H2zM8 9l4 6H5z" stroke="#bbb" /><circle cx="12" cy="6" r="2.500" stroke="#bbb" /></Toggle></StatusGroup>
      <StatusGroup className="w-[26px]"><Toggle label="Hardware acceleration"><circle cx="8" cy="8" r="7" fill="#0a4f9c" stroke="#1f7ee0" strokeWidth="1.500" /><path d="M7 9l5-3" stroke="#4ba3f5" /></Toggle></StatusGroup>
      <StatusGroup className="w-[47px]">
        <Toggle label="Clean screen"><path d="M1.500 2.500h13v11h-13z" stroke="#ccc" /><path d="M9 7l3-2.500M10 4.500h2.500V7M7 9l-3 2.500M6 11.500H3.500V9" stroke="#ccc" /></Toggle>
        <Toggle label="Customization"><path d="M2 3h12M2 8h12M2 13h12" stroke="#ccc" strokeWidth="1.500" /></Toggle>
      </StatusGroup>
    </footer>
  );
}

export default function App() {
  return (
    <div className="flex h-screen flex-col overflow-hidden bg-black py-[18px] font-['Open_Sans',sans-serif]">
      <TopBars />
      <Ribbon />
      <FileTabs />
      <main className="flex min-h-0 flex-1">
        <div className="relative flex-1 overflow-hidden bg-white">
          <Drawing />
          <p className="absolute top-[5px] left-[3px] text-[11px] text-black">[−][Top][2D Wireframe]</p>
          <p className="absolute top-[104px] left-[517px] text-[11px] leading-[18px] text-black">15</p>
          <p className="absolute top-44 left-[603px] flex h-5 w-[45px] items-center justify-center border border-[#222] bg-[#a0a0a0] text-[11px] text-black">Center</p>
          <ViewCube />
          <NavBar />
          <CommandLine />
        </div>
        <SideToolbar />
      </main>
      <StatusBar />
    </div>
  );
}
